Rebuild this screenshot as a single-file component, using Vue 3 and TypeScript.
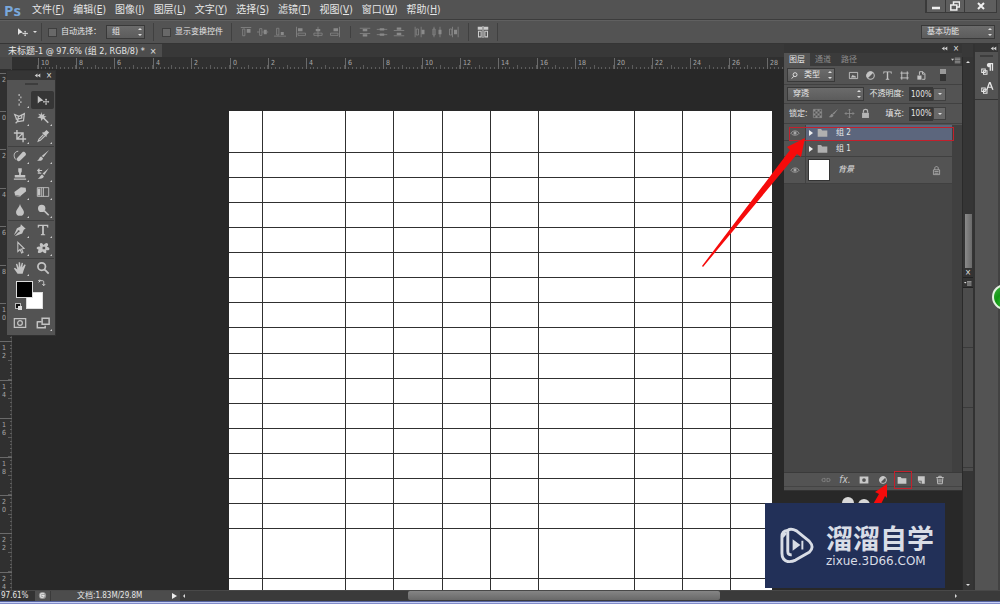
<script setup lang="ts">
import { h, ref } from 'vue'

interface Glyph { f?: string; s?: string; w?: number }

const glyphs: Record<string, Glyph> = {
  move: { f: 'M2 3v9l2.400-2.200L8.500 8.500z', s: 'M11.500 6.500v7M8 10h7M10.500 7.500h2M10.500 12.500h2M9 9v2M14 9v2' },
  marquee: { s: 'M7 1v2.500M9 4v2M7 7v2M9 9.500v2M7 12v2.500', w: 1.3 },
  lasso: { s: 'M2 4l5 2 6-3-1 8-6 1-2-3zM3 9c2 0 4 1 2 3l-2 2M6 6v3l4-1V5', w: 1.4 },
  wand: { f: 'M6 1l1 3.200L10 3 9 5.800l3 .5-2.500 1.500L11 10 8 8.800 6 11.500l-.5-3.200L1.500 7.500l3-1.700L2.500 3l3 1z', s: 'M8 7.500l6 6', w: 1.8 },
  crop: { s: 'M4.500 1v10.500H15M1 4.500h10.500V15M5 11l6-6', w: 1.6 },
  dropper: { f: 'M9 4l3-3 3 3-3 3 .5 1-1 1-4.500-4.500 1-1z', s: 'M8.500 6.500L3.500 11.500l-1 2.500 2.500-1 5-5', w: 1.3 },
  heal: { f: 'M4.500 10.500l6.500-7c1.500-1.500 5 1.500 3.500 3.500l-6.500 6.500c-2 1.500-5-1.500-3.500-3z', s: 'M3 12C0 8 1 3 6 2.500', w: 1.1 },
  brush: { f: 'M15 1l-6.500 8.500-2-1.500zM6 8.500l2 2c-.5 3-3.500 3.500-7 2.500C4 12.500 3.500 9 6 8.500z' },
  stamp: { f: 'M6 1.500h4v3.500L9 7v2h5v3H2V9h5V7L6 5zM1 13h14v1.500H1z' },
  history: { f: 'M14.500 1.500l-5 7.500-2-1.500zM7 8.500l2 2c-.5 2.500-3 3.500-7 2.500 2.500-.5 3-4 5-4.500z', s: 'M1.500 4H7M2 7h4M4 2L2 4l2 2', w: 1.3 },
  eraser: { f: 'M9 2.500l5.500.7L15 7 8.500 12.500l-6-1L1.500 8zM1.500 9.500L2.500 12.500l6 1.200v-.5l-6-1.200z' },
  gradient: { f: 'M2 4h3v8H2z', s: 'M1.500 3h13v10h-13zM6.500 3v10M8.500 3v10', w: 1 },
  drop: { f: 'M8 1C9 5 12.500 7.500 12.500 10.500a4.500 4.200 0 0 1-9 0C3.500 7.500 7 5 8 1z' },
  dodge: { f: 'M6.500 2a4.200 4.200 0 1 1 0 8.400 4.200 4.200 0 0 1 0-8.400z', s: 'M9.500 9l5 5', w: 1.8 },
  pen: { f: 'M9 1.500l5.500 5-2 1-2 4.500-8.500 3 4-4.500a1.200 1.200 0 1 0-.8-.8L1 14 4.500 6l4-2z' },
  path: { s: 'M5.500 1.500v10.500l2.600-2.300 1.800 4 1.600-.8-1.800-3.700 3-.6z', w: 1.2 },
  shape: { f: 'M5 2.500Q7 1.500 8.500 4.500 12 1 13.500 3q1 2-1 3.500 4 1 2.500 3.500-1 1-3.500.5 1 3.500-1 3.500-1.500 0-3-2-3 2.500-5 1.500-1-1 .5-3.500Q0 9 1 7.500 2 6 5 6.500 3.500 3.500 5 2.500zM7.500 6.500v3h3v-3z' },
  hand: { f: 'M5.200 14.500L1 8.500l1.200-.8L5 9.700 3.300 3.500l1.500-.3 1.700 4.500V1.500h1.600L8.500 7l1.500-5 1.400.3-.8 5 2.700-3.500 1.200.8L12 11l-1 3.500z' },
  zoom: { s: 'M6.500 2a4.300 4.300 0 1 1 0 8.600 4.300 4.300 0 0 1 0-8.600zM9.700 9.500l4.800 4.800', w: 2 },
  mask: { s: 'M1.500 3h13v10h-13zM8 5.300a2.700 2.700 0 1 1 0 5.400 2.700 2.700 0 0 1 0-5.400z', w: 1.4 },
  screen: { s: 'M7 2.500h8v7H7zM1.500 6.500h4.500M1.500 6v7.500h9V11', w: 1.7 },
  image: { f: 'M4 11l3-4 2 2 1-1 2 3z', s: 'M2 3.500h12v9H2z', w: 1.3 },
  adjust: { f: 'M12 4L4 12A5.500 5.500 0 0 1 12 4z', s: 'M8 2.500a5.500 5.500 0 1 1 0 11 5.500 5.500 0 0 1 0-11z', w: 1.5 },
  type: { f: 'M2 2h12v3.500h-1c0-1.600-.5-2.200-2-2.200H9V12c0 .8.500 1 1.500 1v1h-5v-1c1 0 1.500-.2 1.500-1V3.300H5c-1.500 0-2 .6-2 2.200H2z' },
  frame: { s: 'M4 2v12M12 2v12M2 4.500h12M2 11.500h12', w: 1.4 },
  smart: { f: 'M2 8h6v6H2z', s: 'M5 7V2.500h5l3 3v8H9M9.500 3v3h3', w: 1.4 },
  checker: { f: 'M2 2h3v3H2zM8 2h3v3H8zM5 5h3v3H5zM11 5h3v3h-3zM2 8h3v3H2zM8 8h3v3H8zM5 11h3v3H5zM11 11h3v3h-3z', s: 'M2 2h12v12H2z' },
  four: { s: 'M8 1.500v13M1.500 8h13M6 3.500l2-2 2 2M6 12.500l2 2 2-2M3.500 6l-2 2 2 2M12.500 6l2 2-2 2', w: 1.2 },
  lock: { f: 'M3 7h10v7.500H3z', s: 'M5 7V4.500C5 1 11 1 11 4.500V7', w: 1.8 },
  lockline: { s: 'M3.500 7h9v7h-9zM5.500 7V4.500C5.500 1.500 10.500 1.500 10.500 4.500V7M5 9.500h6M5 12h6', w: 1.2 },
  folder: { f: 'M1 3h5l1.500 2H15v9H1z' },
  link: { s: 'M7 5.500H4a2.500 2.500 0 0 0 0 5h3M9 5.500h3a2.500 2.500 0 0 1 0 5H9M5 8h6', w: 1.4 },
  layermask: { f: 'M1 2.500h14v11H1zM8 5a3 3 0 1 0 0 6 3 3 0 0 0 0-6z' },
  page: { f: 'M3 2h11v12H9V9H3zM3 10.500h4.500V14z' },
  trash: { s: 'M2 4h12M6 4V2h4v2M3.500 5l.8 9h7.400l.8-9M6.500 6v6M9.500 6v6', w: 1.4 },
  eye: { f: 'M8 5.500a2.500 2.500 0 1 1 0 5 2.500 2.500 0 0 1 0-5z', s: 'M1.500 8.500C4 3.500 12 3.500 14.500 8.500 12 12.500 4 12.500 1.500 8.500z', w: 1.3 },
  para: { f: 'M10 1h5v9h-1.500V2.500h-1V10H11V6C7 6 7 1 10 1z', s: 'M2 8h4v4H2zM4 10h4v4H4z', w: 1.2 },
  char: { f: 'M10.300 1h1.800l3.400 9h-1.700l-.8-2.200H9.400L8.600 10H7zM11.200 3L9.900 6.500h2.600z', s: 'M2 8h4v4H2zM4 10h4v4H4z', w: 1.2 },
  swap: { s: 'M3 6l3-3M3 3h7c2 0 2 1 2 8M9.500 9l2.500 3 2.500-3M5 1L3 3l2 2', w: 1.4 },
  menu: { f: 'M0 6h5L2.500 9z', s: 'M6 5h9M6 7.500h9M6 10h9M6 12.500h9', w: 1 },
  search: { s: 'M9 3a3.500 3.500 0 1 1 0 7 3.500 3.500 0 0 1 0-7zM6.500 9.500L3 13.500', w: 1.6 },
  alTop: { f: 'M9 4h5v5H9z', s: 'M1 2h14M3.500 4v9h3V4z' },
  alMidV: { f: 'M9 5h4v6H9z', s: 'M0 8h3M7 8h2M13 8h2M3.500 3.500h3v9h-3z' },
  alBot: { f: 'M9 8h4v4H9z', s: 'M0 13.500h16M3.500 3v9h3V3z' },
  alLeft: { f: 'M4 3h6v4H4z', s: 'M2 1v14M4 9.500h10v3H4z' },
  alCenter: { f: 'M5 4h6v3H5z', s: 'M8 1v14M2.500 9.500h11v3h-11z' },
  alRight: { f: 'M6 3h6v4H6z', s: 'M14 1v14M2 9.500h10v3H2z' },
  diTop: { f: 'M5 4h6v3H5zM5 11h6v3H5z', s: 'M1 3h14M1 10h14' },
  diMid: { f: 'M5 3h6v3H5zM5 10h6v3H5z', s: 'M1 4.500h14M1 11.500h14' },
  diBot: { f: 'M5 2h6v3H5zM5 9h6v3H5z', s: 'M1 6h14M1 13h14' },
  diLeft: { f: 'M10 5h4v6h-4z', s: 'M1.500 1v14M9.500 1v14M3 4h3v8H3z' },
  diCen: { f: 'M10 5h4v6h-4z', s: 'M4 1v14M12 1v14M2.500 4h3v8h-3z' },
  diRight: { f: 'M8 5h4v6H8z', s: 'M6 1v14M13.500 1v14M2 4h3v8H2z' },
  auto: { f: 'M1 1h6v4H1zM9 1h6v4H9z', s: 'M2 7h3.500v7.500H2zM10.500 7H14v7.500h-3.500zM8 0v16', w: 1.4 }
}

const Icon = (props: { name: string }) => {
  const g = glyphs[props.name]
  return h('svg', { class: 'icon', viewBox: '0 0 16 16', 'aria-hidden': 'true' }, [
    g.f ? h('path', { d: g.f, fill: 'currentColor', 'fill-rule': 'evenodd' }) : null,
    g.s ? h('path', { d: g.s, fill: 'none', stroke: 'currentColor', 'stroke-width': g.w ?? 1 }) : null
  ])
}
Icon.props = ['name']

const menus = [
  ['文件', 'F'], ['编辑', 'E'], ['图像', 'I'], ['图层', 'L'], ['文字', 'Y'],
  ['选择', 'S'], ['滤镜', 'T'], ['视图', 'V'], ['窗口', 'W'], ['帮助', 'H']
]
const alignGroups = [
  ['alTop', 'alMidV', 'alBot'], ['alLeft', 'alCenter', 'alRight'],
  ['diTop', 'diMid', 'diBot'], ['diLeft', 'diCen', 'diRight']
]
const toolGroups = [
  ['marquee', 'move', 'lasso', 'wand', 'crop', 'dropper'],
  ['heal', 'brush', 'stamp', 'history', 'eraser', 'gradient', 'drop', 'dodge'],
  ['pen', 'type', 'path', 'shape'],
  ['hand', 'zoom']
]

const unit = 38.4
const hMarks = Array.from({ length: 21 }, (_, i) => ({ at: Math.round(229.5 + (i - 6) * unit), label: String(Math.abs(i - 6) * 2) }))
  .filter(m => m.at > 12)
const hTicks = Array.from({ length: 260 }, (_, i) => ({ at: Math.round(37 + i * unit / 10), major: i % 5 === 0 }))
const vMarks = Array.from({ length: 14 }, (_, i) => ({ at: Math.round(42 + (i - 1) * unit), digits: String(Math.abs(i - 1) * 2).split('') }))
const vTicks = Array.from({ length: 150 }, (_, i) => ({ at: Math.round(3 + i * unit / 10), major: i % 5 === 0 }))

const columns = [33, 116, 164, 213, 261, 309, 405, 453, 501]
const rows = [41, 66, 91, 116, 141, 166, 191, 216, 242, 267, 292, 317, 342, 367, 392, 417, 467]

const layers = [
  { name: '组 2', group: true },
  { name: '组 1', group: true },
  { name: '背景', group: false }
]
const selected = ref(0)
const opacity = ref('100%')
const fill = ref('100%')
</script>

<template>
  <div class="app">
    <header class="menubar">
      <span class="logo">Ps</span>
      <nav class="menus">
        <button v-for="m in menus" :key="m[1]" type="button">{{ m[0] }}(<u>{{ m[1] }}</u>)</button>
      </nav>
      <div class="window-controls">
        <button type="button" aria-label="最小化"><svg viewBox="0 0 10 10"><path d="M1 7h8" stroke-width="2.500" /></svg></button>
        <button type="button" aria-label="还原"><svg viewBox="0 0 10 10"><path d="M3.500 4V1h6v5H7M.8 4h6v5h-6z" stroke-width="1.500" /></svg></button>
        <button type="button" aria-label="关闭" class="wide"><svg viewBox="0 0 10 10"><path d="M2 2l6 6M8 2L2 8" stroke-width="2" /></svg></button>
      </div>
    </header>

    <div class="options">
      <button type="button" class="current-tool" aria-label="移动工具"><Icon name="move" /><i class="down"></i></button>
      <label class="check"><input type="checkbox">自动选择：</label>
      <span class="pick pick-group"><select aria-label="自动选择对象"><option>组</option></select></span>
      <i class="rule"></i>
      <label class="check"><input type="checkbox">显示变换控件</label>
      <i class="rule"></i>
      <div class="aligns">
        <span v-for="(g, i) in alignGroups" :key="i" class="align-group" :class="{ divided: i === 2 }">
          <button v-for="a in g" :key="a" type="button" :aria-label="a"><Icon :name="a" /></button>
        </span>
      </div>
      <i class="rule"></i>
      <button type="button" class="auto" aria-label="自动对齐"><Icon name="auto" /></button>
      <i class="rule"></i>
      <span class="pick pick-space"><select aria-label="工作区"><option>基本功能</option></select></span>
    </div>

    <main class="main">
      <section class="document">
        <div class="doc-tabs">
          <div class="doc-tab">未标题-1 @ 97.6% (组 2, RGB/8) *<button type="button" aria-label="关闭文档">×</button></div>
        </div>
        <div class="doc-body">
          <div class="view">
            <svg class="ruler-h" width="100%" height="12">
              <line v-for="t in hTicks" :key="t.at" :x1="t.at + 0.5" :x2="t.at + 0.5" :y1="t.major ? 8 : 10" y2="12" class="tick" />
              <g v-for="m in hMarks" :key="m.at">
                <line :x1="m.at + 0.5" :x2="m.at + 0.5" y1="1" y2="12" class="tick mark" />
                <text :x="m.at + 3" y="8">{{ m.label }}</text>
              </g>
              <rect width="12" height="12" class="corner" />
            </svg>
            <div class="view-row">
              <svg class="ruler-v" width="12" height="100%">
                <line v-for="t in vTicks" :key="t.at" :y1="t.at + 0.5" :y2="t.at + 0.5" :x1="t.major ? 8 : 10" x2="12" class="tick" />
                <line x1="12" x2="12" y1="0" y2="100%" class="tick" />
                <g v-for="m in vMarks" :key="m.at">
                  <line :y1="m.at + 0.5" :y2="m.at + 0.5" x1="0" x2="12" class="tick mark" />
                  <text v-for="(d, i) in m.digits" :key="i" x="2" :y="m.at + 9 + i * 8">{{ d }}</text>
                </g>
              </svg>
              <div class="stage">
                <svg class="paper" width="543" height="479">
                  <line v-for="x in columns" :key="x" :x1="x + 0.5" :x2="x + 0.5" y1="0" y2="479" />
                  <line v-for="y in rows" :key="y" x1="0" x2="543" :y1="y + 0.5" :y2="y + 0.5" />
                </svg>
              </div>
            </div>
          </div>
          <div class="vscroll">
            <i class="up"></i>
            <div class="vthumb"></div>
            <div class="mini">
              <button type="button" aria-label="关闭">×</button>
              <button type="button" aria-label="菜单"><Icon name="menu" /></button>
              <div class="mini-body"></div>
            </div>
            <i class="dn"></i>
          </div>
        </div>
      </section>

      <aside class="dock">
        <div class="dock-head"><svg viewBox="0 0 10 6"><path d="M5 0v6L1 3zM9 0v6L5 3z" /></svg></div>
        <div class="dock-icons">
          <i class="grip"></i>
          <button type="button" aria-label="段落"><Icon name="para" /></button>
          <button type="button" aria-label="字符"><Icon name="char" /></button>
        </div>
        <div class="orb"></div>
      </aside>
    </main>

    <footer class="status">
      <span class="percent">97.61%</span>
      <span class="status-icon"><svg viewBox="0 0 10 10"><circle cx="5" cy="5" r="4" fill="#999" /><path d="M3 3h4M3 3v4h3l1-2H4" fill="none" stroke="#eee" /></svg></span>
      <span class="size">文档:1.83M/29.8M</span>
      <button type="button" class="play" aria-label="文档信息"></button>
      <i class="left"></i>
      <div class="track"><div class="thumb"></div></div>
      <i class="right"></i>
      <span class="tail"></span>
    </footer>
    <div class="taskbar"></div>

    <section class="tools">
      <div class="panel-head"><svg viewBox="0 0 10 6"><path d="M5 0v6L1 3zM9 0v6L5 3z" /></svg><button type="button" aria-label="关闭工具">×</button></div>
      <div class="tool-body">
        <i class="grip"></i>
        <div v-for="(g, i) in toolGroups" :key="i" class="tool-group">
          <button v-for="t in g" :key="t" type="button" :aria-label="t" :class="{ active: t === 'move', solo: t === 'move' || t === 'zoom' }"><Icon :name="t" /></button>
        </div>
        <div class="swatches">
          <button type="button" class="back" aria-label="背景色"></button>
          <button type="button" class="fore" aria-label="前景色"></button>
          <span class="swap"><Icon name="swap" /></span>
          <span class="reset"><i></i></span>
        </div>
        <div class="tool-group modes">
          <button type="button" class="solo" aria-label="快速蒙版"><Icon name="mask" /></button>
          <button type="button" aria-label="屏幕模式"><Icon name="screen" /></button>
        </div>
      </div>
    </section>

    <section class="layers">
      <div class="panel-head"><svg viewBox="0 0 10 6"><path d="M5 0v6L1 3zM9 0v6L5 3z" /></svg><button type="button" aria-label="关闭面板">×</button></div>
      <div class="tabs">
        <button type="button" class="on">图层</button><button type="button">通道</button><button type="button">路径</button>
        <button type="button" class="tab-menu" aria-label="面板菜单"><Icon name="menu" /></button>
      </div>
      <div class="row filter">
        <span class="pick pick-kind"><Icon name="search" /><select aria-label="滤镜类型"><option>类型</option></select></span>
        <div class="kinds">
          <button v-for="k in ['image', 'adjust', 'type', 'frame', 'smart']" :key="k" type="button" :aria-label="k"><Icon :name="k" /></button>
        </div>
        <button type="button" class="switch" aria-label="滤镜开关"></button>
      </div>
      <div class="row">
        <span class="pick pick-blend"><select aria-label="混合模式"><option>穿透</option></select></span>
        <label class="amount">不透明度:<input v-model="opacity"></label>
        <button type="button" class="drop" aria-label="不透明度选项"><i class="down"></i></button>
      </div>
      <div class="row last">
        <span class="lock-label">锁定:</span>
        <div class="locks">
          <button v-for="k in ['checker', 'brush', 'four', 'lock']" :key="k" type="button" :aria-label="k"><Icon :name="k" /></button>
        </div>
        <label class="amount">填充:<input v-model="fill"></label>
        <button type="button" class="drop" aria-label="填充选项"><i class="down"></i></button>
      </div>
      <div class="list">
        <div v-for="(l, i) in layers" :key="l.name" class="layer" :class="{ selected: selected === i, tall: !l.group }" @click="selected = i">
          <button type="button" class="eye" aria-label="显示图层"><Icon name="eye" /></button>
          <template v-if="l.group"><i class="caret"></i><Icon name="folder" /></template>
          <i v-else class="preview"></i>
          <span class="layer-name">{{ l.name }}</span>
          <Icon v-if="!l.group" name="lockline" />
        </div>
      </div>
      <div class="actions">
        <button type="button" class="dim" aria-label="链接图层"><Icon name="link" /></button>
        <button type="button" class="fx">fx.</button>
        <button type="button" aria-label="蒙版"><Icon name="layermask" /></button>
        <button type="button" aria-label="调整"><Icon name="adjust" /></button>
        <button type="button" aria-label="新建组"><Icon name="folder" /></button>
        <button type="button" aria-label="新建图层"><Icon name="page" /></button>
        <button type="button" aria-label="删除"><Icon name="trash" /></button>
      </div>
    </section>

    <svg class="notes" width="300" height="420" viewBox="0 0 300 420" aria-hidden="true">
      <rect x="89.500" y="27.500" width="164" height="13" />
      <rect x="194.500" y="371.500" width="17" height="17" />
      <path d="M2 166L90 50 87 47 105 38 101 57 97 54 3 167z" />
      <circle cx="148" cy="403" r="6" class="bump" />
      <circle cx="164" cy="405" r="6" class="bump" />
      <path d="M187 384L175 392 179 394 172 406H180L185 396 187 398z" />
    </svg>

    <div class="watermark">
      <svg viewBox="0 0 36 38" aria-hidden="true">
        <path d="M7.500 3.500Q2 4 2 10v17q0 7 6 8.500 4 .5 8-1.500l14-8q6-5 0-11.500L17 4Q11 1 8 3.500V25q0 4 4 3.500" />
        <path d="M2.500 10L6 6" />
        <path d="M13 12.500v12l8-6zM22 14h2v9h-2z" class="solid" />
      </svg>
      <div class="brand"><strong>溜溜自学</strong><span>zixue.3D66.COM</span></div>
    </div>
  </div>
</template>

<style>
html, body { margin: 0; height: 100%; background: #282828; }
#app { height: 100%; }
</style>

<style scoped>
.app { position: relative; display: flex; flex-direction: column; height: 100vh; overflow: hidden; background: #535353; color: #e6e6e6; font: 8px/12px "DejaVu Sans Condensed", "Noto Sans CJK SC", sans-serif; }
* { box-sizing: border-box; }
button { display: inline-flex; align-items: center; justify-content: center; margin: 0; padding: 0; border: 0; background: none; color: inherit; font: inherit; }
.icon { width: 12px; height: 12px; flex: none; display: block; }
select, input { margin: 0; font: inherit; color: inherit; }
.menubar { display: flex; align-items: center; height: 20px; flex: none; border-bottom: 1px solid #3c3c3c; }
.logo { width: 32px; padding-left: 4px; font: bold 15px/18px "Open Sans", sans-serif; color: #79a8dc; }
.menus { display: flex; gap: 9px; white-space: nowrap; font-size: 10px; }
.window-controls { display: flex; align-self: flex-start; margin-left: auto; margin-right: 3px; height: 13px; border: 1px solid #3a3a3a; border-top: 0; background: #5e5e5e; }
.window-controls button { width: 19px; border-left: 1px solid #3a3a3a; }
.window-controls .wide { width: 32px; }
.window-controls svg { width: 10px; height: 10px; fill: none; stroke: #f0f0f0; }
.options { display: flex; align-items: center; height: 24px; flex: none; padding: 0 5px 0 15px; border-top: 1px solid #606060; border-bottom: 1px solid #353535; }
.current-tool { width: 27px; margin-right: 6px; padding-right: 4px; gap: 4px; border-right: 1px solid #404040; height: 18px; }
.current-tool .icon { width: 13px; }
.down { border: 2px solid transparent; border-top: 2px solid #ddd; border-bottom: 0; }
.check { display: flex; align-items: center; gap: 4px; white-space: nowrap; }
.check input { appearance: none; width: 9px; height: 9px; border: 1px solid #3e3e3e; background: #686868; }
.pick { position: relative; display: flex; align-items: center; height: 14px; border: 1px solid #393939; background: linear-gradient(#6b6b6b, #5c5c5c); }
.pick select { appearance: none; width: 100%; height: 12px; padding: 0 0 0 5px; border: 0; background: none; line-height: 12px; }
.pick::before, .pick::after { content: ""; position: absolute; right: 2px; border: 2px solid transparent; }
.pick::before { top: 2px; border-top: 0; border-bottom-color: #ddd; }
.pick::after { bottom: 2px; border-bottom: 0; border-top-color: #ddd; }
.pick-group { width: 39px; margin-left: 5px; }
.rule { width: 1px; height: 18px; margin: 0 8px; background: #404040; }
.aligns { display: flex; gap: 9px; color: #8a8a8a; }
.align-group { display: flex; gap: 5px; }
.align-group.divided { padding-left: 8px; border-left: 1px solid #404040; }
.auto { color: #ccc; }
.pick-space { width: 74px; margin-left: auto; }
.main { display: flex; flex: 1; min-height: 0; }
.document { display: flex; flex-direction: column; flex: 1; min-width: 0; }
.doc-tabs { height: 13px; flex: none; background: #383838; display: flex; }
.doc-tab { display: flex; align-items: center; gap: 5px; padding: 0 5px 0 8px; background: #4d4d4d; white-space: nowrap; font-size: 9px; }
.doc-body { display: flex; flex: 1; min-height: 0; }
.view { display: flex; flex-direction: column; flex: 1; min-width: 0; background: #282828; }
.view-row { display: flex; flex: 1; min-height: 0; }
.ruler-h, .ruler-v { display: block; flex: none; background: #303030; font-size: 7px; fill: #a8a8a8; }
.tick { stroke: #5c5c5c; stroke-width: 1; }
.mark { stroke: #6a6a6a; }
.corner { fill: #484848; }
.stage { flex: 1; overflow: hidden; padding: 42px 0 0 217px; }
.paper { display: block; background: #fff; }
.paper line { stroke: #303030; stroke-width: 1; }
.vscroll { width: 11px; flex: none; display: flex; flex-direction: column; align-items: center; background: #353535; border-left: 1px solid #2a2a2a; }
.up { margin-top: 4px; border: 2px solid transparent; border-top: 0; border-bottom-color: #ddd; }
.vthumb { width: 7px; height: 54px; margin-top: 151px; background: linear-gradient(90deg, #8a8a8a, #6a6a6a); }
.mini { width: 100%; height: 203px; display: flex; flex-direction: column; background: #333; }
.mini button { height: 10px; border-bottom: 1px solid #222; }
.mini .icon { width: 8px; }
.mini-body { flex: 1; background: repeating-linear-gradient(#4c4c4c 0 59px, #3a3a3a 59px 60px); }
.dn { margin: auto 0 4px; border: 2px solid transparent; border-bottom: 0; border-top-color: #ddd; }
.dock { position: relative; width: 27px; flex: none; border-left: 2px solid #323232; border-right: 2px solid #424242; overflow: visible; }
.dock-head { display: flex; align-items: center; justify-content: flex-end; height: 8px; padding-right: 1px; background: #353535; }
.dock-head svg, .panel-head svg { width: 7px; height: 5px; fill: #ccc; }
.dock-icons { display: flex; flex-direction: column; align-items: center; gap: 5px; height: 48px; border-bottom: 1px solid #343434; }
.grip { width: 13px; height: 2px; margin-top: 3px; background: #3d3d3d; }
.dock-icons .icon { width: 14px; height: 14px; }
.orb { position: absolute; top: 240px; right: -20px; width: 26px; height: 26px; border: 2px solid #e4f3e2; border-radius: 50%; background: radial-gradient(circle at 50% 75%, #39cc36, #129614 45%, #44b544); }
.status { display: flex; align-items: center; height: 11px; flex: none; background: #3a3a3a; white-space: nowrap; border-top: 1px solid #484848; line-height: 10px; }
.percent { width: 35px; padding-left: 1px; background: #333; }
.status-icon { width: 16px; height: 10px; display: flex; justify-content: center; background: #505050; border-right: 1px solid #3a3a3a; }
.status-icon svg { width: 9px; height: 9px; }
.size { width: 118px; padding-left: 26px; background: #4c4c4c; }
.play { width: 11px; height: 10px; background: #4c4c4c; }
.play::before { content: ""; border: 3px solid transparent; border-left: 5px solid #eee; border-right: 0; }
.left { margin: 0 3px; border: 2px solid transparent; border-left: 0; border-right-color: #ddd; }
.track { flex: 1; height: 10px; padding-left: 22%; }
.thumb { width: 57%; height: 9px; border-radius: 2px; background: linear-gradient(#858585, #696969); }
.right { border: 2px solid transparent; border-right: 0; border-left-color: #ddd; }
.tail { width: 43px; }
.taskbar { height: 3px; flex: none; background: #c6cff5; border-top: 1px solid #5663a0; border-bottom: 1px solid #7f8ac8; }
.panel-head { display: flex; align-items: center; justify-content: flex-end; gap: 5px; height: 9px; padding-right: 3px; background: #353535; line-height: 8px; }
.tools { position: absolute; left: 7px; top: 71px; width: 48px; background: #535353; outline: 1px solid #303030; }
.tool-body { display: flex; flex-direction: column; padding: 0 1px 2px; }
.tools .grip { margin: 3px auto 6px; }
.tool-group { display: grid; grid-template-columns: 1fr 1fr; padding-bottom: 1px; border-bottom: 1px solid #404040; }
.tool-group button { position: relative; height: 18px; color: #c4c4c4; }
.tool-group .icon { width: 14px; height: 14px; }
.tool-group button:not(.solo)::after { content: ""; position: absolute; right: 2px; bottom: 1px; border: 1px solid #ccc; border-top-color: transparent; border-left-color: transparent; }
.tool-group .active { background: #363636; border-radius: 2px; }
.tool-group:nth-of-type(4), .modes { border-bottom: 0; }
.swatches { position: relative; height: 36px; }
.fore, .back { position: absolute; width: 17px; height: 17px; border: 1px solid #ddd; }
.fore { left: 8px; top: 3px; background: #000; }
.back { left: 18px; top: 14px; background: #fff; }
.swap { position: absolute; left: 29px; top: 1px; }
.swap .icon { width: 9px; height: 9px; }
.reset { position: absolute; left: 7px; top: 25px; width: 6px; height: 6px; background: #111; border: 1px solid #bbb; }
.reset i { position: absolute; left: 2px; top: 2px; width: 4px; height: 4px; background: #ddd; }
.layers { position: absolute; right: 38px; top: 44px; bottom: 113px; width: 178px; display: flex; flex-direction: column; background: #535353; border-bottom: 1px solid #333; }
.tabs { display: flex; height: 13px; flex: none; background: #3b3b3b; color: #8c8c8c; }
.tabs button { width: 26px; }
.tabs .on { background: #535353; color: #e4e4e4; }
.tabs .tab-menu { width: 12px; margin-left: auto; color: #ccc; }
.tabs .icon { width: 10px; }
.row { display: flex; align-items: center; height: 19px; flex: none; padding: 0 3px; border-bottom: 1px solid #414141; }
.row.last { padding-right: 16px; height: 20px; }
.row:not(.filter):not(.last) { padding-right: 16px; }
.pick-kind { width: 48px; padding-left: 2px; }
.pick-kind .icon { width: 9px; height: 9px; }
.kinds { display: flex; gap: 6px; margin-left: 13px; color: #c4c4c4; }
.kinds .icon, .locks .icon { width: 11px; height: 11px; }
.switch { width: 6px; height: 12px; margin-left: auto; margin-right: 13px; background: linear-gradient(#999 0 5px, #333 5px); }
.pick-blend { width: 77px; }
.lock-label { margin-left: 2px; }
.amount { display: flex; align-items: center; gap: 5px; margin-left: auto; white-space: nowrap; }
.amount input { width: 24px; height: 14px; padding: 0 0 0 2px; border: 0; background: #383838; }
.drop { width: 13px; height: 13px; border: 1px solid #404040; background: #686868; flex: none; }
.locks { display: flex; gap: 5px; margin-left: 5px; color: #8d8d8d; }
.locks button:last-child { color: #b4b4b4; }
.list { flex: 1; min-height: 0; margin-top: 1px; background: #464646; border-right: 10px solid #404040; }
.layer { display: flex; align-items: center; height: 16px; padding-right: 10px; background: #535353; border-bottom: 1px solid #404040; }
.layer.tall { height: 27px; }
.layer.selected { background: linear-gradient(90deg, #535353 22px, #5c667d 22px); }
.eye { width: 22px; height: 100%; flex: none; border-right: 1px solid #424242; color: #a6a6a6; }
.eye .icon { width: 10px; height: 10px; }
.caret { margin: 0 4px 0 3px; border: 3px solid transparent; border-left: 4px solid #eee; border-right: 0; }
.layer > .icon { color: #b0b0b0; width: 11px; height: 11px; }
.layer-name { margin-left: 8px; margin-right: auto; }
.preview { width: 22px; height: 22px; margin-left: 2px; background: #fff; border: 1px solid #333; }
.tall .layer-name { font-style: italic; }
.actions { display: flex; align-items: center; gap: 7px; height: 15px; margin-bottom: 3px; padding-left: 36px; flex: none; border-top: 1px solid #3a3a3a; border-bottom: 1px solid #444; color: #c8c8c8; }
.actions button { width: 12px; }
.actions .icon { width: 10px; height: 10px; }
.actions .dim { color: #858585; }
.actions .fx { font-style: italic; font-size: 10px; }
.notes { position: absolute; left: 700px; top: 100px; fill: #f60b0b; pointer-events: none; }
.notes rect { fill: none; stroke: #c3202c; }
.notes .bump { fill: #d8d8d8; }
.watermark { position: absolute; right: 55px; bottom: 16px; display: flex; align-items: center; gap: 11px; width: 180px; height: 85px; padding-left: 15px; background: #223058; color: #d9dde6; }
.watermark svg { width: 35px; height: 37px; flex: none; fill: none; stroke: #d9dde6; stroke-width: 3; stroke-linejoin: round; }
.watermark svg .solid { fill: #d9dde6; stroke: none; }
.brand { display: flex; flex-direction: column; }
.brand strong { font: bold 27px/30px "Liberation Sans", "Noto Sans CJK SC", sans-serif; white-space: nowrap; }
.brand span { font: 12px/12px "DejaVu Sans", sans-serif; }
</style>
